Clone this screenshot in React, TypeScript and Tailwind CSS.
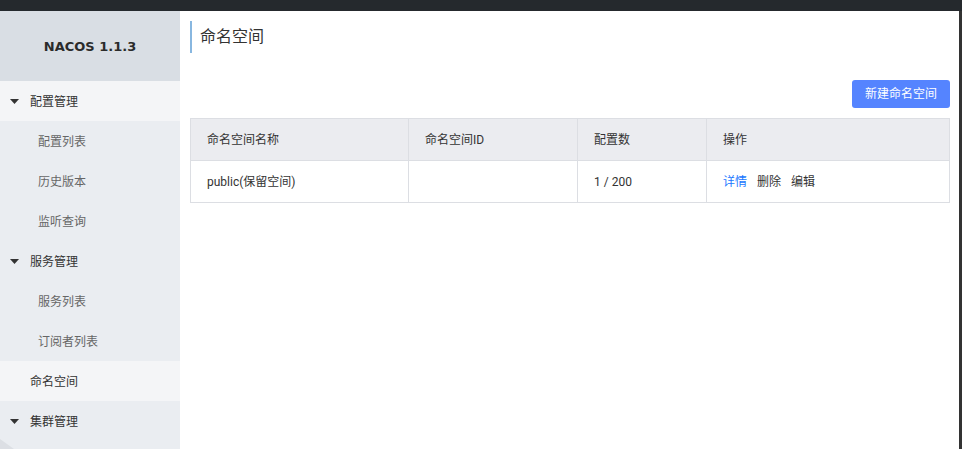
import React from "react";

const font = { fontFamily: 'Roboto, "Noto Sans CJK SC", sans-serif' };

function Caret() {
  return (
    <svg width="9" height="5" viewBox="0 0 9 5" className="shrink-0">
      <polygon points="0,0 9,0 4.5,5" fill="#333" />
    </svg>
  );
}

function Group({ label, light }: { label: string; light?: boolean }) {
  return (
    <div className={`h-[40px] flex items-center pl-[10px] pt-[1px] text-[12px] text-[#333] ${light ? "bg-[#f4f5f7]" : ""}`}>
      <Caret />
      <span className="ml-[11px]">{label}</span>
    </div>
  );
}

function Sub({ label }: { label: string }) {
  return <div className="h-[40px] flex items-center pl-[38px] pt-[1px] text-[12px] text-[#666]">{label}</div>;
}

export default function App() {
  const cols = ["w-[218px]", "w-[169px]", "w-[129px]", "flex-1"];
  return (
    <div className="w-[962px] h-[449px] overflow-hidden flex flex-col bg-white" style={font}>
      <div className="h-[11px] bg-[#25292d] shrink-0" />
      <div className="flex flex-1 min-h-0">
        <div className="w-[180px] bg-[#eaedf1] relative shrink-0">
          <div className="h-[70px] bg-[#d9dee4] flex items-center justify-center pt-[1px]">
            <span className="text-[13px] font-bold text-[#2b2b2b]" style={{ fontFamily: '"DejaVu Sans", sans-serif' }}>
              NACOS 1.1.3
            </span>
          </div>
          <Group label="配置管理" light />
          <Sub label="配置列表" />
          <Sub label="历史版本" />
          <Sub label="监听查询" />
          <Group label="服务管理" />
          <Sub label="服务列表" />
          <Sub label="订阅者列表" />
          <div className="h-[40px] flex items-center pl-[30px] pt-[1px] text-[12px] text-[#333] bg-[#f4f5f7]">命名空间</div>
          <Group label="集群管理" />
          <svg className="absolute left-0 bottom-0" width="14" height="12" viewBox="0 0 14 12">
            <polygon points="0,2 14,12 0,12" fill="#dcdfe4" />
          </svg>
        </div>
        <div className="flex-1 pl-[10px] pr-[9px] pt-[10px]">
          <div className="h-[32px] border-l-2 border-[#88b7e0] pl-[8px] flex items-center text-[16px] text-[#333]">
            命名空间
          </div>
          <div className="flex justify-end mt-[27px]">
            <button className="h-[28px] px-[13px] rounded-[3px] bg-[#5584ff] text-white text-[12px]">新建命名空间</button>
          </div>
          <div className="mt-[10px] border border-[#dcdee3] text-[12px] text-[#333]">
            <div className="flex h-[42px] bg-[#ebecf0] border-b border-[#dcdee3]">
              {["命名空间名称", "命名空间ID", "配置数", "操作"].map((t, i) => (
                <div key={t} className={`${cols[i]} ${i < 3 ? "border-r border-[#dcdee3]" : ""} flex items-center pl-[16px]`}>
                  {t}
                </div>
              ))}
            </div>
            <div className="flex h-[41px]">
              <div className={`${cols[0]} border-r border-[#dcdee3] flex items-center pl-[16px]`}>public(保留空间)</div>
              <div className={`${cols[1]} border-r border-[#dcdee3]`} />
              <div className={`${cols[2]} border-r border-[#dcdee3] flex items-center pl-[16px]`}>1 / 200</div>
              <div className={`${cols[3]} flex items-center pl-[16px] gap-[10px]`}>
                <span className="text-[#2077ff]">详情</span>
                <span>删除</span>
                <span>编辑</span>
              </div>
            </div>
          </div>
        </div>
        <div className="w-[3px] bg-[#333] shrink-0" />
      </div>
    </div>
  );
}
